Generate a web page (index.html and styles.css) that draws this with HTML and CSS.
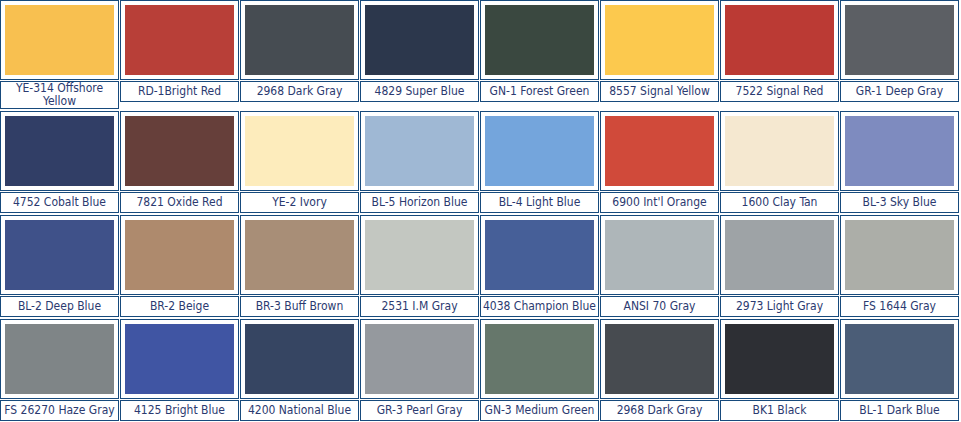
FILE: index.html
```html
<!DOCTYPE html>
<html lang="en">

<head>
    <meta charset="UTF-8">
    <title>Color Chart</title>
    <link rel="stylesheet" href="styles.css">
</head>

<body>

    <div class="chart">
        <!-- row 1 -->
        <div class="item"><div class="swatch-box"><div class="swatch" style="background: #f8c050;"></div></div><div class="label">YE-314 Offshore Yellow</div></div>
        <div class="item"><div class="swatch-box"><div class="swatch" style="background: #b83f38;"></div></div><div class="label">RD-1Bright Red</div></div>
        <div class="item"><div class="swatch-box"><div class="swatch" style="background: #464c52;"></div></div><div class="label">2968 Dark Gray</div></div>
        <div class="item"><div class="swatch-box"><div class="swatch" style="background: #2c374c;"></div></div><div class="label">4829 Super Blue</div></div>
        <div class="item"><div class="swatch-box"><div class="swatch" style="background: #3a4840;"></div></div><div class="label">GN-1 Forest Green</div></div>
        <div class="item"><div class="swatch-box"><div class="swatch" style="background: #fcc94e;"></div></div><div class="label">8557 Signal Yellow</div></div>
        <div class="item"><div class="swatch-box"><div class="swatch" style="background: #bb3a34;"></div></div><div class="label">7522 Signal Red</div></div>
        <div class="item"><div class="swatch-box"><div class="swatch" style="background: #5c5f64;"></div></div><div class="label">GR-1 Deep Gray</div></div>

        <!-- row 2 -->
        <div class="item"><div class="swatch-box"><div class="swatch" style="background: #313e66;"></div></div><div class="label">4752 Cobalt Blue</div></div>
        <div class="item"><div class="swatch-box"><div class="swatch" style="background: #663f3a;"></div></div><div class="label">7821 Oxide Red</div></div>
        <div class="item"><div class="swatch-box"><div class="swatch" style="background: #fdecbc;"></div></div><div class="label">YE-2 Ivory</div></div>
        <div class="item"><div class="swatch-box"><div class="swatch" style="background: #9fb8d4;"></div></div><div class="label">BL-5 Horizon Blue</div></div>
        <div class="item"><div class="swatch-box"><div class="swatch" style="background: #74a5dc;"></div></div><div class="label">BL-4 Light Blue</div></div>
        <div class="item"><div class="swatch-box"><div class="swatch" style="background: #d04a3a;"></div></div><div class="label">6900 Int'l Orange</div></div>
        <div class="item"><div class="swatch-box"><div class="swatch" style="background: #f5e8d0;"></div></div><div class="label">1600 Clay Tan</div></div>
        <div class="item"><div class="swatch-box"><div class="swatch" style="background: #7e8bbf;"></div></div><div class="label">BL-3 Sky Blue</div></div>

        <!-- row 3 -->
        <div class="item"><div class="swatch-box"><div class="swatch" style="background: #3f5189;"></div></div><div class="label">BL-2 Deep Blue</div></div>
        <div class="item"><div class="swatch-box"><div class="swatch" style="background: #ae8a6d;"></div></div><div class="label">BR-2 Beige</div></div>
        <div class="item"><div class="swatch-box"><div class="swatch" style="background: #a88e77;"></div></div><div class="label">BR-3 Buff Brown</div></div>
        <div class="item"><div class="swatch-box"><div class="swatch" style="background: #c3c7c1;"></div></div><div class="label">2531 I.M Gray</div></div>
        <div class="item"><div class="swatch-box"><div class="swatch" style="background: #465f98;"></div></div><div class="label">4038 Champion Blue</div></div>
        <div class="item"><div class="swatch-box"><div class="swatch" style="background: #aeb6b9;"></div></div><div class="label">ANSI 70 Gray</div></div>
        <div class="item"><div class="swatch-box"><div class="swatch" style="background: #9ea3a6;"></div></div><div class="label">2973 Light Gray</div></div>
        <div class="item"><div class="swatch-box"><div class="swatch" style="background: #acaea8;"></div></div><div class="label">FS 1644 Gray</div></div>

        <!-- row 4 -->
        <div class="item"><div class="swatch-box"><div class="swatch" style="background: #7f8587;"></div></div><div class="label">FS 26270 Haze Gray</div></div>
        <div class="item"><div class="swatch-box"><div class="swatch" style="background: #4055a3;"></div></div><div class="label">4125 Bright Blue</div></div>
        <div class="item"><div class="swatch-box"><div class="swatch" style="background: #364562;"></div></div><div class="label">4200 National Blue</div></div>
        <div class="item"><div class="swatch-box"><div class="swatch" style="background: #95999e;"></div></div><div class="label">GR-3 Pearl Gray</div></div>
        <div class="item"><div class="swatch-box"><div class="swatch" style="background: #66776b;"></div></div><div class="label">GN-3 Medium Green</div></div>
        <div class="item"><div class="swatch-box"><div class="swatch" style="background: #474b50;"></div></div><div class="label">2968 Dark Gray</div></div>
        <div class="item"><div class="swatch-box"><div class="swatch" style="background: #2d2f34;"></div></div><div class="label">BK1 Black</div></div>
        <div class="item"><div class="swatch-box"><div class="swatch" style="background: #4b5d77;"></div></div><div class="label">BL-1 Dark Blue</div></div>
    </div>

</body>

</html>
```

FILE: styles.css
```css
    body {
        margin: 0;
        padding: 0;
        background: #fff;
        font-family: 'DejaVu Sans Condensed', 'DejaVu Sans', sans-serif;
        font-stretch: condensed;
    }

    .chart {
        display: grid;
        grid-template-columns: repeat(8, 119px);
        column-gap: 1px;
        row-gap: 2px;
        align-items: start;
    }

    .item {
        display: flex;
        flex-direction: column;
        gap: 1px;
    }

    .swatch-box {
        border: 1px solid #174a7c;
        padding: 4px;
    }

    .swatch {
        height: 70px;
    }

    .label {
        border: 1px solid #174a7c;
        min-height: 19px;
        padding: 0 1px;
        display: flex;
        align-items: center;
        justify-content: center;
        text-align: center;
        font-size: 12px;
        line-height: 13px;
        color: #2b3a70;
    }
```
